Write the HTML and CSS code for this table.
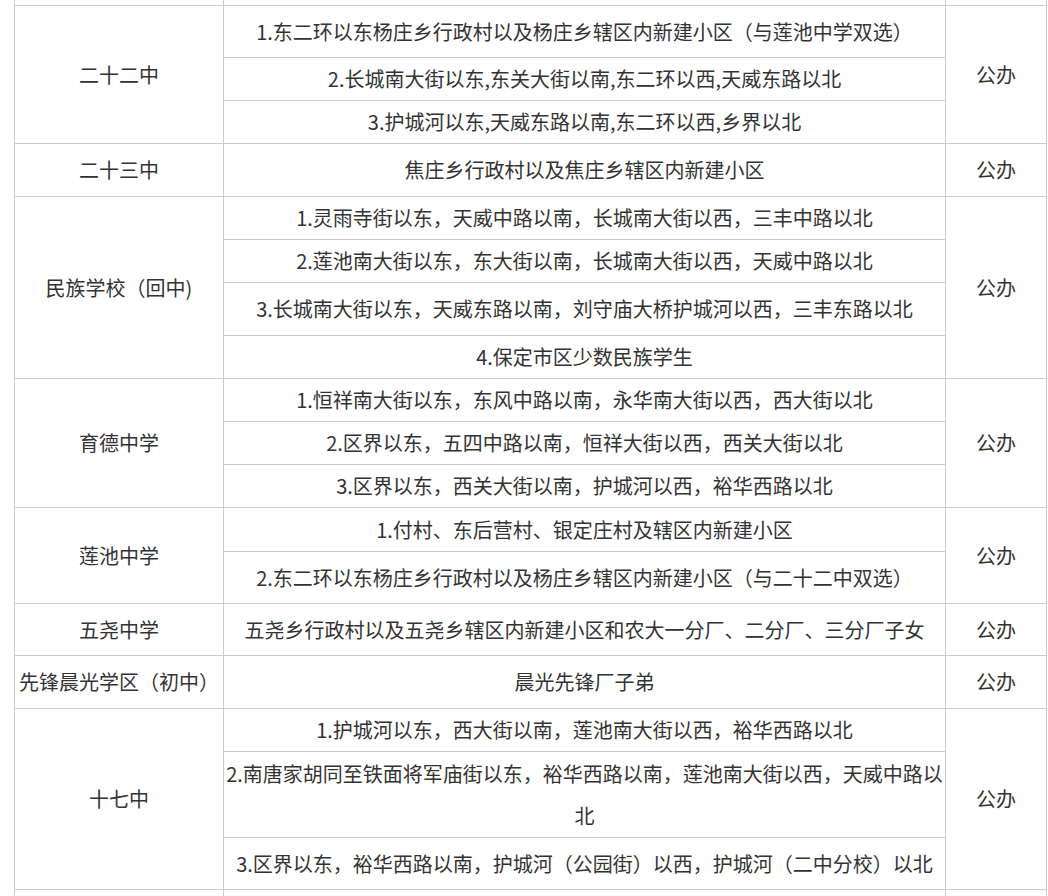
FILE: index.html
```html
<!DOCTYPE html>
<html lang="zh-CN">
<head>
<meta charset="utf-8">
<title>学区划分</title>
<link rel="stylesheet" href="styles.css">
</head>
<body>
<table class="zones">
  <colgroup>
    <col class="c-school">
    <col class="c-area">
    <col class="c-type">
  </colgroup>
  <tbody>
    <tr class="spacer"><td></td><td></td><td></td></tr>

    <tr class="h52"><td rowspan="3">二十二中</td><td>1.东二环以东杨庄乡行政村以及杨庄乡辖区内新建小区（与莲池中学双选）</td><td rowspan="3">公办</td></tr>
    <tr class="h43"><td>2.长城南大街以东,东关大街以南,东二环以西,天威东路以北</td></tr>
    <tr class="h43"><td>3.护城河以东,天威东路以南,东二环以西,乡界以北</td></tr>

    <tr class="h53"><td>二十三中</td><td>焦庄乡行政村以及焦庄乡辖区内新建小区</td><td>公办</td></tr>

    <tr class="h43"><td rowspan="4">民族学校（回中)</td><td>1.灵雨寺街以东，天威中路以南，长城南大街以西，三丰中路以北</td><td rowspan="4">公办</td></tr>
    <tr class="h43"><td>2.莲池南大街以东，东大街以南，长城南大街以西，天威中路以北</td></tr>
    <tr class="h53"><td>3.长城南大街以东，天威东路以南，刘守庙大桥护城河以西，三丰东路以北</td></tr>
    <tr class="h43"><td>4.保定市区少数民族学生</td></tr>

    <tr class="h43"><td rowspan="3">育德中学</td><td>1.恒祥南大街以东，东风中路以南，永华南大街以西，西大街以北</td><td rowspan="3">公办</td></tr>
    <tr class="h43"><td>2.区界以东，五四中路以南，恒祥大街以西，西关大街以北</td></tr>
    <tr class="h43"><td>3.区界以东，西关大街以南，护城河以西，裕华西路以北</td></tr>

    <tr class="h44"><td rowspan="2">莲池中学</td><td>1.付村、东后营村、银定庄村及辖区内新建小区</td><td rowspan="2">公办</td></tr>
    <tr class="h52"><td>2.东二环以东杨庄乡行政村以及杨庄乡辖区内新建小区（与二十二中双选）</td></tr>

    <tr class="h52"><td>五尧中学</td><td>五尧乡行政村以及五尧乡辖区内新建小区和农大一分厂、二分厂、三分厂子女</td><td>公办</td></tr>

    <tr class="h53"><td>先锋晨光学区（初中）</td><td>晨光先锋厂子弟</td><td>公办</td></tr>

    <tr class="h43"><td rowspan="3">十七中</td><td>1.护城河以东，西大街以南，莲池南大街以西，裕华西路以北</td><td rowspan="3">公办</td></tr>
    <tr class="h86"><td>2.南唐家胡同至铁面将军庙街以东，裕华西路以南，莲池南大街以西，天威中路以北</td></tr>
    <tr class="h52"><td>3.区界以东，裕华西路以南，护城河（公园街）以西，护城河（二中分校）以北</td></tr>

    <tr class="h43"><td></td><td></td><td></td></tr>
  </tbody>
</table>
</body>
</html>
```

FILE: styles.css
```css
html, body {
  margin: 0;
  padding: 0;
  background: #ffffff;
  overflow: hidden;
}

body {
  font-family: "Noto Sans CJK SC", "Noto Sans", "Liberation Sans", sans-serif;
  font-size: 20px;
  color: #333333;
}

.zones {
  border-collapse: collapse;
  table-layout: fixed;
  width: 1032px;
  margin-left: 14px;
}

.c-school { width: 209px; }
.c-area { width: 722px; }
.c-type { width: 101px; }

.zones td {
  border: 1px solid #cccccc;
  padding: 0 1px;
  text-align: center;
  vertical-align: middle;
  line-height: 42px;
}

.zones .spacer td {
  border-top: none;
  height: 5px;
  line-height: 0;
}

.h43 { height: 43px; }
.h44 { height: 44px; }
.h52 { height: 52px; }
.h53 { height: 53px; }
.h86 { height: 86px; }
```
